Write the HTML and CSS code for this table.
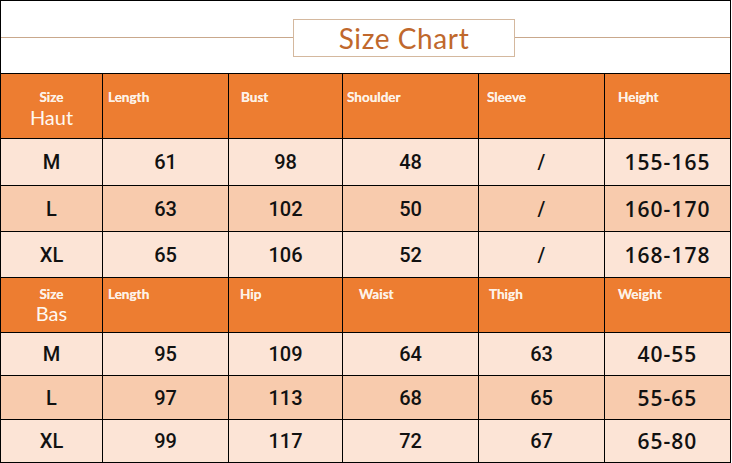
FILE: index.html
```html
<!DOCTYPE html>
<html>
<head>
<meta charset="utf-8">
<link rel="stylesheet" href="styles.css">
</head>
<body>
<div class="chart">
  <div class="title-bar">
    <div class="rule rule-left"></div>
    <div class="title-box">Size Chart</div>
    <div class="rule rule-right"></div>
  </div>
  <div class="grid">
    <div class="hd hd1 size"><span class="lbl">Size</span><span class="part">Haut</span></div>
    <div class="hd hd1 p5"><span class="lbl">Length</span></div>
    <div class="hd hd1 p12"><span class="lbl">Bust</span></div>
    <div class="hd hd1 p4"><span class="lbl">Shoulder</span></div>
    <div class="hd hd1 p8"><span class="lbl">Sleeve</span></div>
    <div class="hd hd1 p13"><span class="lbl">Height</span></div>

    <div class="c lt">M</div><div class="c lt">61</div><div class="c lt">98</div><div class="c lt">48</div><div class="c lt">/</div><div class="c lt big">155-165</div>
    <div class="c dk">L</div><div class="c dk">63</div><div class="c dk">102</div><div class="c dk">50</div><div class="c dk">/</div><div class="c dk big">160-170</div>
    <div class="c lt">XL</div><div class="c lt">65</div><div class="c lt">106</div><div class="c lt">52</div><div class="c lt">/</div><div class="c lt big">168-178</div>

    <div class="hd hd2 size"><span class="lbl">Size</span><span class="part">Bas</span></div>
    <div class="hd hd2 p5"><span class="lbl">Length</span></div>
    <div class="hd hd2 p11"><span class="lbl">Hip</span></div>
    <div class="hd hd2 p16"><span class="lbl">Waist</span></div>
    <div class="hd hd2 p10"><span class="lbl">Thigh</span></div>
    <div class="hd hd2 p13"><span class="lbl">Weight</span></div>

    <div class="c lt">M</div><div class="c lt">95</div><div class="c lt">109</div><div class="c lt">64</div><div class="c lt">63</div><div class="c lt big">40-55</div>
    <div class="c dk">L</div><div class="c dk">97</div><div class="c dk">113</div><div class="c dk">68</div><div class="c dk">65</div><div class="c dk big">55-65</div>
    <div class="c lt">XL</div><div class="c lt">99</div><div class="c lt">117</div><div class="c lt">72</div><div class="c lt">67</div><div class="c lt big">65-80</div>
  </div>
</div>
</body>
</html>
```
FILE: styles.css
```css
html, body {
  margin: 0;
  padding: 0;
  background: #fff;
}
.chart {
  box-sizing: border-box;
  width: 731px;
  height: 463px;
  border: 1px solid #000;
  display: flex;
  flex-direction: column;
  overflow: hidden;
}
.title-bar {
  height: 72px;
  display: flex;
  align-items: flex-start;
  flex: 0 0 72px;
}
.rule {
  height: 1px;
  background: #c9a88c;
  margin-top: 36px;
}
.rule-left { flex: 0 0 292px; }
.rule-right { flex: 1 1 auto; }
.title-box {
  box-sizing: border-box;
  flex: 0 0 222px;
  height: 38px;
  margin-top: 18px;
  border: 1px solid #d4b89e;
  display: flex;
  align-items: center;
  justify-content: center;
  font-family: "Lato", "Open Sans", sans-serif;
  font-size: 28px;
  letter-spacing: 0.6px;
  color: #c0682c;
  padding-bottom: 1px;
}
.grid {
  display: grid;
  grid-template-columns: 101px 125px 113px 135px 125px 125px;
  grid-template-rows: 64px 46px 45px 45px 54px 42px 43px 42px;
  gap: 1px;
  background: #000;
  border-top: 1px solid #000;
}
.hd {
  background: #ed7d31;
  color: #fdf1e6;
  font-family: "Lato", "Open Sans", sans-serif;
  display: flex;
  flex-direction: column;
  align-items: flex-start;
}
.hd1 { padding-top: 15px; }
.hd2 { padding-top: 8px; }
.hd .lbl {
  font-size: 13.5px;
  font-weight: 700;
  line-height: 16px;
  text-shadow: 0 0 0.4px #fdf1e6;
}
.hd.size { align-items: center; }
.hd .part {
  font-size: 20px;
  font-weight: 400;
  line-height: 22px;
  margin-top: 1px;
  color: #fff8f0;
}
.hd2 .part { margin-top: 0; }
.p4 { padding-left: 4px; }
.p5 { padding-left: 5px; }
.p8 { padding-left: 8px; }
.p10 { padding-left: 10px; }
.p11 { padding-left: 11px; }
.p12 { padding-left: 12px; }
.p13 { padding-left: 13px; }
.p16 { padding-left: 16px; }
.c {
  display: flex;
  align-items: center;
  justify-content: center;
  font-family: "Roboto", "Liberation Sans", sans-serif;
  font-weight: 500;
  font-size: 20px;
  color: #111;
}
.lt { background: #fce4d6; }
.dk { background: #f8cbad; }
.big {
  font-family: "Open Sans", "Lato", sans-serif;
  font-weight: 600;
  font-size: 21px;
  letter-spacing: 1px;
}
```
